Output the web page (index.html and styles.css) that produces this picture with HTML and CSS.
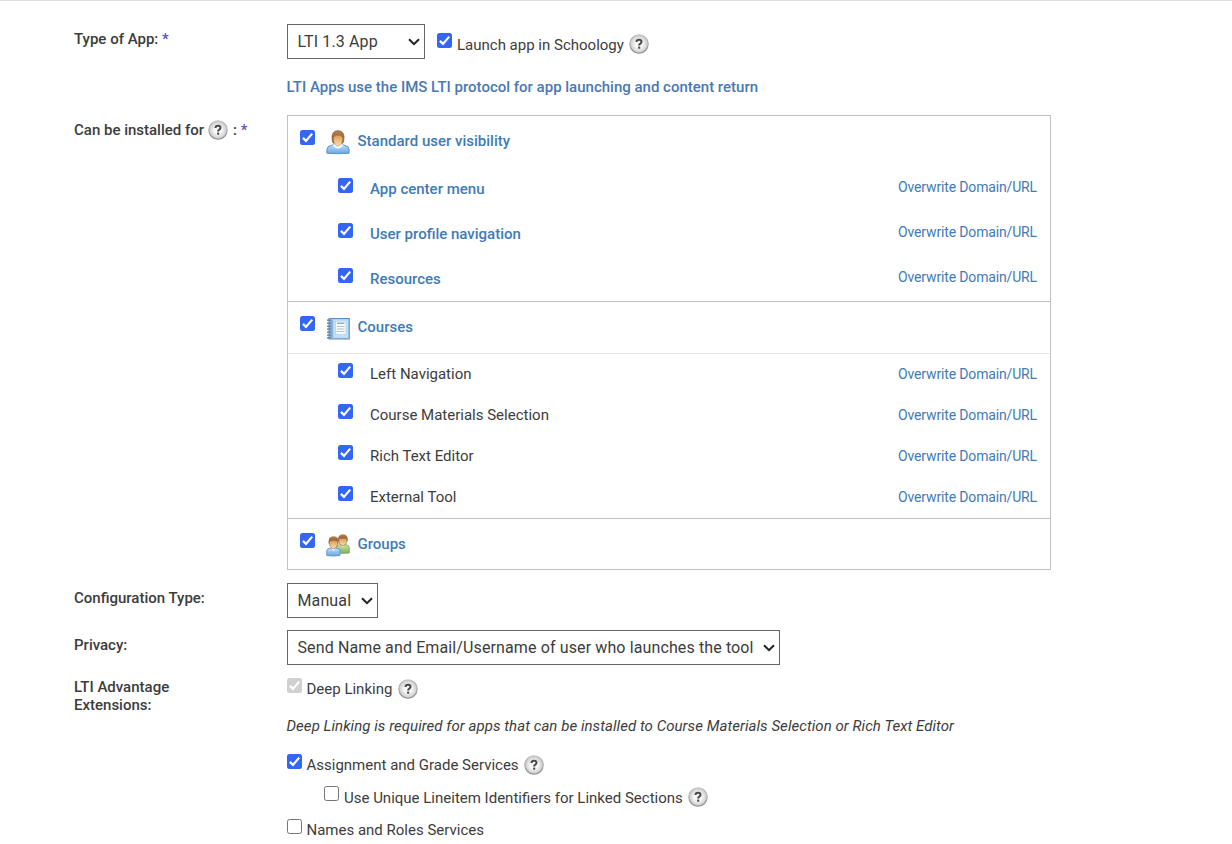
FILE: index.html
```html
<!DOCTYPE html>
<html lang="en">
<head>
    <meta charset="UTF-8">
    <meta name="viewport" content="width=device-width, initial-scale=1.0">
    <title>Edit App</title>
    <link rel="stylesheet" href="styles.css">
</head>
<body>
    <svg class="sprites" width="0" height="0">
        <defs>
            <linearGradient id="helpRing" x1="0" y1="0" x2="0" y2="1">
                <stop offset="0" stop-color="#c2c2c2"/>
                <stop offset="1" stop-color="#8c8c8c"/>
            </linearGradient>
            <radialGradient id="helpFill">
                <stop offset="0.4" stop-color="#f8f8f8"/>
                <stop offset="1" stop-color="#c6c6c6"/>
            </radialGradient>
            <linearGradient id="blueShirt" x1="0" y1="0" x2="0" y2="1">
                <stop offset="0" stop-color="#c3dff8"/>
                <stop offset="1" stop-color="#68a5e2"/>
            </linearGradient>
            <linearGradient id="greenShirt" x1="0" y1="0" x2="0" y2="1">
                <stop offset="0" stop-color="#c9e4a8"/>
                <stop offset="1" stop-color="#7fb158"/>
            </linearGradient>
            <linearGradient id="hair" x1="0" y1="0" x2="0" y2="1">
                <stop offset="0" stop-color="#b98252"/>
                <stop offset="1" stop-color="#7d4b23"/>
            </linearGradient>
            <linearGradient id="face" x1="0" y1="0" x2="0" y2="1">
                <stop offset="0" stop-color="#d99d58"/>
                <stop offset="1" stop-color="#fbe3ae"/>
            </linearGradient>
        </defs>
        <symbol id="help" viewBox="0 0 20 20">
            <circle cx="10" cy="10" r="9.2" fill="url(#helpFill)" stroke="url(#helpRing)" stroke-width="1.1"/>
            <path d="M7.5 8Q7.6 5.8 10 5.8Q12.5 5.8 12.5 7.8Q12.5 8.9 11.3 9.7Q10.1 10.4 10.1 11.6" fill="none" stroke="#484848" stroke-width="2"/>
            <rect x="9.1" y="12.6" width="2.1" height="2.1" fill="#484848"/>
        </symbol>
    </svg>

    <form class="app-form">
        <div class="form-row row-type">
            <label class="row-label">Type of App: <span class="required">*</span></label>
            <div class="field">
                <div class="inline">
                    <select class="select-type"><option>LTI 1.3 App</option></select>
                    <label class="check-label"><input type="checkbox" checked>Launch app in Schoology</label>
                    <svg class="help"><use href="#help"/></svg>
                </div>
                <p class="note">LTI Apps use the IMS LTI protocol for app launching and content return</p>
            </div>
        </div>

        <div class="form-row row-install">
            <label class="row-label">Can be installed for <svg class="help"><use href="#help"/></svg> : <span class="required">*</span></label>
            <div class="install-box">
                <section class="group">
                    <div class="group-head">
                        <input type="checkbox" checked>
                        <svg class="icon" viewBox="0 0 24 26">
                            <path d="M.9 24.2V20.4Q1 17.2 5 16.5L8 15.5H16L19 16.5Q23 17.2 23.1 20.4V24.2Q12 25.2 .9 24.2Z" fill="url(#blueShirt)" stroke="#5594d6"/>
                            <path d="M6.5 16.3Q12 23 17.5 16.3L15.5 14.5H8.5Z" fill="#f1f8ff"/>
                            <path d="M6.2 11.5Q4.6 1.8 12 1.6Q19.4 1.8 17.8 11.5Q17.5 14.4 15.6 14.6H8.4Q6.5 14.4 6.2 11.5Z" fill="url(#hair)" stroke="#96673f" stroke-width=".7"/>
                            <path d="M7.7 8.4Q8.5 6.6 12 6.3Q15.5 6.6 16.4 8.4Q17 13.8 14.4 15.8Q12 18.6 9.6 15.8Q7 13.8 7.7 8.4Z" fill="url(#face)" stroke="#b97f43" stroke-width=".5"/>
                        </svg>
                        <span class="group-title">Standard user visibility</span>
                    </div>
                    <div class="option option-bold"><input type="checkbox" checked><span>App center menu</span><a>Overwrite Domain/URL</a></div>
                    <div class="option option-bold"><input type="checkbox" checked><span>User profile navigation</span><a>Overwrite Domain/URL</a></div>
                    <div class="option option-bold"><input type="checkbox" checked><span>Resources</span><a>Overwrite Domain/URL</a></div>
                </section>

                <section class="group">
                    <div class="group-head group-head-line">
                        <input type="checkbox" checked>
                        <svg class="icon" viewBox="0 0 24 26">
                            <rect x="3" y="3.5" width="20.3" height="20.5" fill="#a9cdec" stroke="#5b8fc0"/>
                            <rect x="4.2" y="4.5" width="2.4" height="18.5" fill="#79a9d4"/>
                            <rect x="7.5" y="4.7" width="14.5" height="18" fill="#c4def5"/>
                            <rect x="9.5" y="6.2" width="10.5" height="13.5" fill="#f5faff" stroke="#a9cbe8" stroke-width=".6"/>
                            <path d="M11 8.2H18.5" stroke="#5d8cb8" stroke-width="1"/>
                            <path d="M11 11.5H18.5M11 14H18.5M11 16.5H18.5" stroke="#a5a5a5" stroke-width=".7"/>
                            <path d="M1 5.2H4.6M1 8.2H4.6M1 11.2H4.6M1 14.2H4.6M1 17.2H4.6M1 20.2H4.6M1 22.9H4.6" stroke="#5c7489" stroke-width="1.3"/>
                        </svg>
                        <span class="group-title">Courses</span>
                    </div>
                    <div class="option"><input type="checkbox" checked><span>Left Navigation</span><a>Overwrite Domain/URL</a></div>
                    <div class="option"><input type="checkbox" checked><span>Course Materials Selection</span><a>Overwrite Domain/URL</a></div>
                    <div class="option"><input type="checkbox" checked><span>Rich Text Editor</span><a>Overwrite Domain/URL</a></div>
                    <div class="option"><input type="checkbox" checked><span>External Tool</span><a>Overwrite Domain/URL</a></div>
                </section>

                <section class="group">
                    <div class="group-head">
                        <input type="checkbox" checked>
                        <svg class="icon" viewBox="0 0 24 26">
                            <path d="M10 21V15.5Q10.5 12.7 14 12.7H20Q23 12.9 23.3 15.5V21Q17 21.8 10 21Z" fill="url(#greenShirt)" stroke="#77a557" stroke-width=".8"/>
                            <path d="M14.8 12.5L16.8 15.6L19 12.5Z" fill="#f4f9ee"/>
                            <path d="M12.2 9Q11.4 2.4 16.9 2.3Q22.4 2.4 21.6 9Z" fill="url(#hair)"/>
                            <path d="M12.9 6.8Q17 5.8 20.9 6.8Q21.3 12.8 16.9 13.8Q12.5 12.8 12.9 6.8Z" fill="url(#face)" stroke="#a96f3a" stroke-width=".7"/>
                            <path d="M.8 23.5V18.5Q1.2 16.2 4.5 16.1H10.5Q13.8 16.3 14 18.5V23.5Q7.5 24.6 .8 23.5Z" fill="url(#blueShirt)" stroke="#5594d6" stroke-width=".9"/>
                            <path d="M5 15.5L7.5 19.2L10 15.5Z" fill="#f5faff"/>
                            <path d="M2.6 11.5Q1.8 4.4 7.6 4.3Q13.3 4.4 12.5 11.5Z" fill="url(#hair)"/>
                            <path d="M3.4 9Q7.6 8 11.7 9Q12.2 15.6 7.6 16.8Q2.9 15.6 3.4 9Z" fill="url(#face)" stroke="#a96f3a" stroke-width=".7"/>
                        </svg>
                        <span class="group-title">Groups</span>
                    </div>
                </section>
            </div>
        </div>

        <div class="form-row row-select">
            <label class="row-label">Configuration Type:</label>
            <select class="select-config"><option>Manual</option></select>
        </div>

        <div class="form-row row-select">
            <label class="row-label">Privacy:</label>
            <select class="select-privacy"><option>Send Name and Email/Username of user who launches the tool</option></select>
        </div>

        <div class="form-row row-lti">
            <label class="row-label">LTI Advantage<br>Extensions:</label>
            <div class="field">
                <div class="inline">
                    <label class="check-label"><input type="checkbox" checked disabled>Deep Linking</label>
                    <svg class="help"><use href="#help"/></svg>
                </div>
                <p class="hint">Deep Linking is required for apps that can be installed to Course Materials Selection or Rich Text Editor</p>
                <div class="inline">
                    <label class="check-label"><input type="checkbox" checked>Assignment and Grade Services</label>
                    <svg class="help"><use href="#help"/></svg>
                </div>
                <div class="inline nested">
                    <label class="check-label"><input type="checkbox">Use Unique Lineitem Identifiers for Linked Sections</label>
                    <svg class="help"><use href="#help"/></svg>
                </div>
                <div class="inline">
                    <label class="check-label"><input type="checkbox">Names and Roles Services</label>
                </div>
            </div>
        </div>
    </form>
</body>
</html>
```
FILE: styles.css
```css
* {
    box-sizing: border-box;
}
body {
    font-family: Roboto, Arial, sans-serif;
    font-size: 15px;
    line-height: 18px;
    color: #3c3c3c;
    margin: 0;
    background-color: #fff;
    border-top: 1px solid #ddd;
    overflow: hidden;
}
.sprites {
    display: block;
}
p {
    margin: 0;
}
.app-form {
    padding: 23px 0 0 74px;
}
.form-row {
    display: grid;
    grid-template-columns: 213px auto;
    justify-content: start;
    align-items: start;
}
.row-label {
    font-weight: 500;
    padding-top: 6px;
}
.required {
    color: #5b4fc4;
}
.help {
    width: 20px;
    height: 20px;
    flex: none;
}
.row-label .help {
    margin: -2px 1px 0 0.5px;
    vertical-align: -5px;
}
input[type="checkbox"] {
    appearance: none;
    width: 15px;
    height: 15px;
    margin: 0;
    flex: none;
    background-color: #fff;
    border: 1px solid #767676;
    border-radius: 2.5px;
}
input[type="checkbox"]:checked {
    border: none;
    background: #3366f5 url("data:image/svg+xml,%3Csvg xmlns='http://www.w3.org/2000/svg' width='15' height='15'%3E%3Cpath d='M2.9 7.9L6 10.9L12.2 3.6' fill='none' stroke='%23fff' stroke-width='2.2'/%3E%3C/svg%3E") no-repeat center;
}
input[type="checkbox"]:disabled {
    background-color: #d0d0d0;
}
select {
    appearance: none;
    font-family: inherit;
    font-size: 16px;
    letter-spacing: 0.12px;
    color: #3c3c3c;
    height: 35px;
    padding: 0 0 0 9.5px;
    background: #fff url("data:image/svg+xml,%3Csvg xmlns='http://www.w3.org/2000/svg' width='12' height='8'%3E%3Cpath d='M1 1.2L6 6.2L11 1.2' fill='none' stroke='%23222' stroke-width='2'/%3E%3C/svg%3E") no-repeat right 4px center;
    border: 1px solid #666;
    border-radius: 0;
}
.select-type {
    width: 138px;
}
.select-config {
    width: 91px;
}
.select-privacy {
    width: 493px;
}
.inline {
    display: flex;
    align-items: center;
    height: 20px;
}
.check-label {
    display: flex;
    align-items: flex-start;
    gap: 4.5px;
    margin-right: 5.5px;
}
.check-label input {
    margin-top: -2px;
}

.row-type .inline {
    height: 35px;
}
.row-type .check-label {
    margin: 6px 5.5px 0 12px;
    gap: 5px;
}
.row-type .check-label input {
    margin-top: -3px;
}
.row-type .field .help {
    margin-top: 5px;
}
.note {
    margin: 19px 0 0 -0.5px;
    font-weight: 500;
    color: #4a78b5;
}

.row-install {
    margin-top: 19px;
}
.install-box {
    width: 764px;
    border: 1px solid #c1c1c1;
}
.group + .group {
    border-top: 1px solid #c1c1c1;
}
.group-head {
    display: flex;
    align-items: flex-start;
    height: 50px;
    padding: 14px 12px 0;
}
.group-head-line {
    height: 52px;
    border-bottom: 1px solid #e8e8e8;
}
.group-head .icon {
    width: 24px;
    height: 26px;
    margin: -1px 7.5px 0 11px;
}
.group-title {
    margin-top: 2px;
    font-weight: 500;
    color: #3f7bb6;
}
.option {
    display: flex;
    align-items: flex-start;
    height: 41px;
    padding: 9px 13px 0 50px;
}
.option span {
    margin: 2px auto 0 17px;
}
.option a {
    margin-top: 2px;
    font-size: 14px;
    letter-spacing: -0.15px;
    color: #3f7bb6;
}
.option-bold {
    height: 45px;
    padding-top: 12px;
}
.option-bold span {
    font-weight: 500;
    color: #3f7bb6;
}
.option-bold a {
    margin-top: 0;
}

.row-select {
    margin-top: 12px;
}
.row-install + .row-select {
    margin-top: 13px;
}

.row-lti {
    margin-top: 13px;
}
.row-lti .row-label {
    padding-top: 0;
}
.row-lti .field {
    padding-top: 1px;
}
.hint {
    margin: 18px 0 20px -0.5px;
    font-style: italic;
    letter-spacing: 0.055px;
}
.nested {
    margin: 13px 0 12px;
    padding-left: 37px;
}
.nested .check-label {
    gap: 5px;
}
.nested input {
    margin-top: -3px;
}
.nested .help {
    margin-top: -2px;
}
```
